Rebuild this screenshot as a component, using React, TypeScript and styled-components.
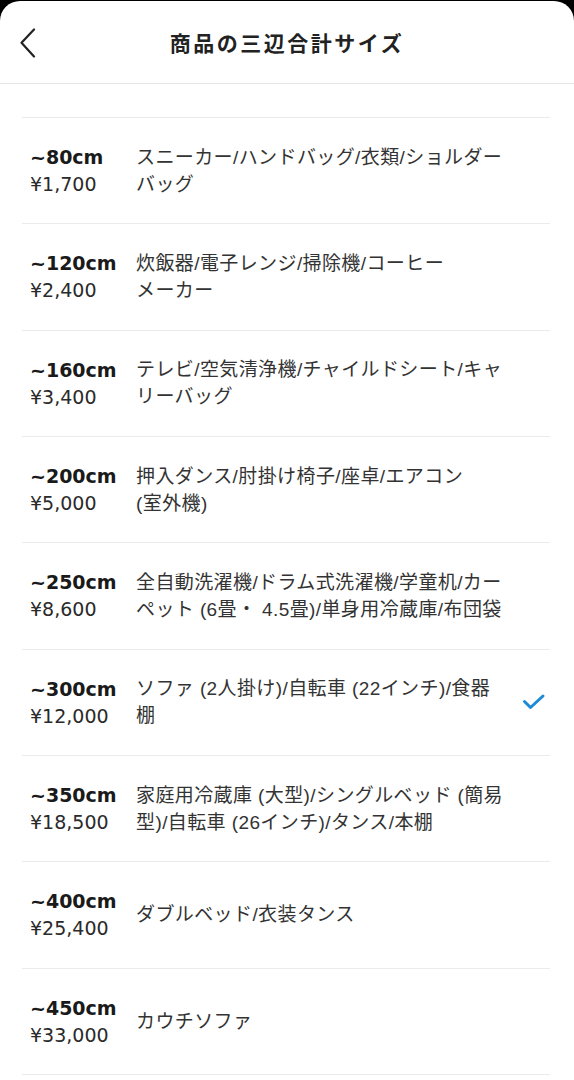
import React from "react";
import styled, { createGlobalStyle } from "styled-components";

const GlobalStyle = createGlobalStyle`
  html, body {
    margin: 0;
    padding: 0;
    background: #000;
  }
  body {
    font-family: "Liberation Sans", "Noto Sans CJK JP", sans-serif;
    -webkit-font-smoothing: antialiased;
  }
`;

const Sheet = styled.div`
  margin-top: 1px;
  min-height: calc(100vh - 1px);
  background: #fff;
  border-radius: 20px 20px 0 0;
  overflow: hidden;
`;

const Header = styled.header`
  position: relative;
  height: 82px;
  display: flex;
  align-items: center;
  justify-content: center;
  border-bottom: 1px solid #e6e6e6;
`;

const BackButton = styled.button`
  position: absolute;
  left: 14px;
  top: 22px;
  width: 28px;
  height: 40px;
  padding: 0;
  border: none;
  background: none;
  display: flex;
  align-items: center;
  justify-content: center;
`;

const Title = styled.h1`
  margin: 0;
  font-family: "Noto Sans CJK JP", sans-serif;
  font-size: 21px;
  font-weight: 700;
  letter-spacing: 2.5px;
  color: #222;
`;

const List = styled.ul`
  list-style: none;
  margin: 33px 24px 0 22px;
  padding: 0;
  border-top: 1px solid #ebebeb;
`;

const Row = styled.li`
  height: 105.33px;
  display: flex;
  align-items: center;
  padding-left: 8px;
  border-bottom: 1px solid #ebebeb;
`;

const SizeCol = styled.div`
  width: 106px;
  flex-shrink: 0;
  display: flex;
  flex-direction: column;
  gap: 3px;
  font-family: "DejaVu Sans", "Noto Sans CJK JP", sans-serif;
`;

const Size = styled.span`
  font-size: 19px;
  font-weight: 700;
  color: #1a1a1a;
  line-height: 24px;
`;

const Price = styled.span`
  font-size: 19px;
  color: #2a2a2a;
  line-height: 24px;
`;

const Desc = styled.p`
  margin: 0;
  flex: 1;
  font-size: 19px;
  line-height: 27px;
  letter-spacing: 0.4px;
  color: #333;
  white-space: pre-line;
`;

const Check = styled.div`
  width: 28px;
  display: flex;
  justify-content: center;
  margin-right: 2px;
`;

type Item = { size: string; price: string; desc: string; selected?: boolean };

const items: Item[] = [
  { size: "~80cm", price: "¥1,700", desc: "スニーカー/ハンドバッグ/衣類/ショルダー\nバッグ" },
  { size: "~120cm", price: "¥2,400", desc: "炊飯器/電子レンジ/掃除機/コーヒー\nメーカー" },
  { size: "~160cm", price: "¥3,400", desc: "テレビ/空気清浄機/チャイルドシート/キャ\nリーバッグ" },
  { size: "~200cm", price: "¥5,000", desc: "押入ダンス/肘掛け椅子/座卓/エアコン\n(室外機)" },
  { size: "~250cm", price: "¥8,600", desc: "全自動洗濯機/ドラム式洗濯機/学童机/カー\nペット (6畳・ 4.5畳)/単身用冷蔵庫/布団袋" },
  { size: "~300cm", price: "¥12,000", desc: "ソファ (2人掛け)/自転車 (22インチ)/食器\n棚", selected: true },
  { size: "~350cm", price: "¥18,500", desc: "家庭用冷蔵庫 (大型)/シングルベッド (簡易\n型)/自転車 (26インチ)/タンス/本棚" },
  { size: "~400cm", price: "¥25,400", desc: "ダブルベッド/衣装タンス" },
  { size: "~450cm", price: "¥33,000", desc: "カウチソファ" },
];

const App: React.FC = () => {
  return (
    <>
      <GlobalStyle />
      <Sheet>
        <Header>
          <BackButton aria-label="戻る">
            <svg width="18" height="30" viewBox="0 0 18 30">
              <polyline points="15,1.5 2.5,14.8 15,28.5" fill="none" stroke="#222" strokeWidth="2.2" strokeLinecap="round" strokeLinejoin="round" />
            </svg>
          </BackButton>
          <Title>商品の三辺合計サイズ</Title>
        </Header>
        <List>
          {items.map((it) => (
            <Row key={it.size}>
              <SizeCol>
                <Size>{it.size}</Size>
                <Price>{it.price}</Price>
              </SizeCol>
              <Desc>{it.desc}</Desc>
              <Check>
                {it.selected && (
                  <svg width="24" height="18" viewBox="0 0 24 18">
                    <polyline points="2.5,8.5 8.5,14.5 21,3" fill="none" stroke="#1d8ad6" strokeWidth="3" strokeLinecap="round" strokeLinejoin="round" />
                  </svg>
                )}
              </Check>
            </Row>
          ))}
        </List>
      </Sheet>
    </>
  );
};

export default App;
